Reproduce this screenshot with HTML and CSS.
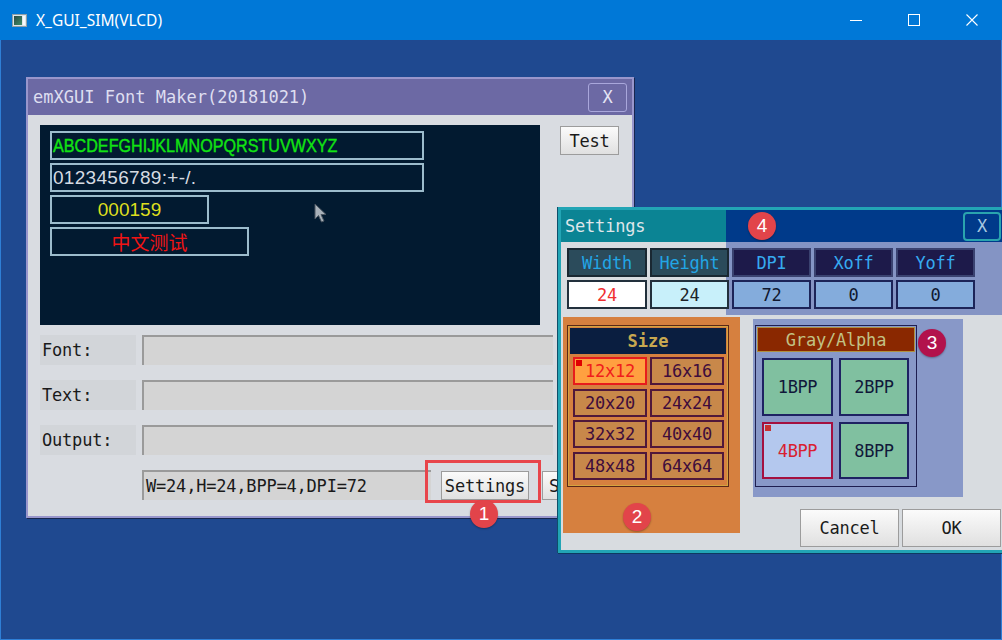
FILE: index.html
```html
<!DOCTYPE html>
<html>
<head>
<meta charset="utf-8">
<title>X_GUI_SIM(VLCD)</title>
<link rel="stylesheet" href="styles.css">
</head>
<body>
<div class="app">
  <div class="titlebar">
    <svg class="app-icon" width="15" height="13" viewBox="0 0 15 13">
      <defs>
        <linearGradient id="ig" x1="0" y1="0" x2="1" y2="1">
          <stop offset="0" stop-color="#2c4a44"/>
          <stop offset="1" stop-color="#3f8f6a"/>
        </linearGradient>
      </defs>
      <rect x="0.5" y="0.5" width="14" height="12" fill="#dfe6ea" stroke="#8fa0a8"/>
      <rect x="2" y="2" width="8" height="9" fill="url(#ig)"/>
      <rect x="11" y="2" width="2" height="9" fill="#f6f9fb"/>
    </svg>
    <span class="app-title">X_GUI_SIM(VLCD)</span>
    <div class="caps">
      <div class="cap"><svg width="12" height="12" viewBox="0 0 12 12"><line x1="0" y1="6.5" x2="12" y2="6.5" stroke="#fff" stroke-width="1"/></svg></div>
      <div class="cap"><svg width="12" height="12" viewBox="0 0 12 12"><rect x="0.5" y="0.5" width="11" height="11" fill="none" stroke="#fff" stroke-width="1"/></svg></div>
      <div class="cap"><svg width="12" height="12" viewBox="0 0 12 12"><path d="M0.5 0.5 L11.5 11.5 M11.5 0.5 L0.5 11.5" stroke="#fff" stroke-width="1.1"/></svg></div>
    </div>
  </div>

  <!-- Font Maker window -->
  <div class="fm">
    <div class="fm-title">
      <span>emXGUI Font Maker(20181021)</span>
      <div class="fm-close">X</div>
    </div>
    <div class="fm-body">
      <div class="top-row">
        <div class="lcd">
          <div class="lbox w1"><span class="t-green">ABCDEFGHIJKLMNOPQRSTUVWXYZ</span></div>
          <div class="lbox w1"><span class="t-digits">0123456789:+-/.</span></div>
          <div class="lbox w3 center"><span class="t-yellow">000159</span></div>
          <div class="lbox w4 center"><span class="t-red">中文测试</span></div>
          <svg class="cursor" width="14" height="20" viewBox="0 0 14 20">
            <path d="M1 1 L1 16 L4.5 12.5 L7.5 19 L10 18 L7 11.5 L12 11.5 Z" fill="#a9b1b9" stroke="#4a5560" stroke-width="1"/>
          </svg>
        </div>
        <div class="btn test">Test</div>
      </div>
      <div class="frow first">
        <div class="flabel">Font:</div>
        <div class="field"></div>
      </div>
      <div class="frow">
        <div class="flabel">Text:</div>
        <div class="field"></div>
      </div>
      <div class="frow">
        <div class="flabel">Output:</div>
        <div class="field"></div>
      </div>
      <div class="frow">
        <div class="fspacer"></div>
        <div class="field info">W=24,H=24,BPP=4,DPI=72</div>
        <div class="btn setbtn">Settings</div>
        <div class="btn sbtn2">Save</div>
      </div>
    </div>
  </div>

  <div class="hl"></div>
  <div class="badge b1">1</div>

  <!-- Settings window -->
  <div class="st">
    <div class="st-title">
      <span>Settings</span>
      <div class="st-close">X</div>
    </div>
    <div class="params">
      <div class="ph">Width</div>
      <div class="ph">Height</div>
      <div class="ph ov">DPI</div>
      <div class="ph ov">Xoff</div>
      <div class="ph ov">Yoff</div>
      <div class="pv w">24</div>
      <div class="pv h">24</div>
      <div class="pv ov">72</div>
      <div class="pv ov">0</div>
      <div class="pv ov">0</div>
    </div>
    <div class="lower">
      <div class="orange">
        <div class="sgroup">
          <div class="stitle">Size</div>
          <div class="sgrid">
            <div class="sbtn sel">12x12</div>
            <div class="sbtn">16x16</div>
            <div class="sbtn">20x20</div>
            <div class="sbtn">24x24</div>
            <div class="sbtn">32x32</div>
            <div class="sbtn">40x40</div>
            <div class="sbtn">48x48</div>
            <div class="sbtn">64x64</div>
          </div>
        </div>
      </div>
      <div class="rcol">
        <div class="blue">
          <div class="ggroup">
            <div class="gtitle">Gray/Alpha</div>
            <div class="ggrid">
              <div class="gbtn">1BPP</div>
              <div class="gbtn">2BPP</div>
              <div class="gbtn sel">4BPP</div>
              <div class="gbtn">8BPP</div>
            </div>
          </div>
        </div>
        <div class="okrow">
          <div class="btn dlg">Cancel</div>
          <div class="btn dlg">OK</div>
        </div>
      </div>
    </div>
  </div>

  <div class="badge b2">2</div>
  <div class="badge b3">3</div>
  <div class="badge b4">4</div>
</div>
</body>
</html>
```
FILE: styles.css
```css
* { box-sizing: border-box; }

body {
  margin: 0;
  width: 1002px;
  height: 640px;
  overflow: hidden;
  font-family: "DejaVu Sans Mono", "Liberation Mono", monospace;
}

.app {
  position: relative;
  width: 1002px;
  height: 640px;
  background: #1f4990;
  overflow: hidden;
  box-shadow: inset 1px 0 0 #2f7fd6, inset -1px 0 0 #2f7fd6, inset 0 -1px 0 #2f7fd6;
}

/* ---------- outer title bar ---------- */
.titlebar {
  height: 40px;
  background: #0078d7;
  display: flex;
  align-items: center;
  color: #fff;
  font-family: "Noto Sans", "Open Sans", sans-serif;
  font-size: 15.5px;
}
.app-icon { margin-left: 12px; margin-top: 1px; }
.app-title { margin-left: 9px; }
.caps { margin-left: auto; display: flex; margin-right: 1px; }
.cap {
  width: 58px;
  height: 40px;
  display: flex;
  align-items: center;
  justify-content: center;
}

/* ---------- Font Maker window ---------- */
.fm {
  position: absolute;
  left: 26px;
  top: 77px;
  width: 608px;
  height: 441px;
  border: 2px solid #9896cc;
  background: #d9dce1;
  box-shadow: 1px 1px 0 #17264f;
  display: flex;
  flex-direction: column;
}
.fm-title {
  height: 36px;
  background: #6c69a4;
  display: flex;
  align-items: center;
  padding-left: 5px;
  color: #dedef0;
  font-size: 17px;
}
.fm-close {
  margin-left: auto;
  margin-right: 5px;
  width: 39px;
  height: 29px;
  border: 1px solid #a9a7db;
  border-radius: 3px;
  display: flex;
  align-items: center;
  justify-content: center;
  color: #e4e4f4;
}
.fm-body {
  flex: 1;
  padding: 10px 0 0 12px;
  display: flex;
  flex-direction: column;
}
.top-row { display: flex; height: 200px; }
.lcd {
  position: relative;
  width: 500px;
  height: 200px;
  background: #021a30;
  padding: 6px 10px;
  display: flex;
  flex-direction: column;
  align-items: flex-start;
  gap: 3px;
}
.lbox {
  height: 29px;
  border: 2px solid #9cbccc;
  display: flex;
  align-items: center;
  overflow: hidden;
  white-space: nowrap;
}
.lbox.w1 { width: 374px; padding-left: 1px; }
.lbox.w3 { width: 159px; }
.lbox.w4 { width: 199px; }
.lbox.center { justify-content: center; }
.t-green {
  display: inline-block;
  font-family: "Liberation Sans", Arial, sans-serif;
  font-size: 19px;
  color: #12e412;
  -webkit-text-stroke: 0.4px #12e412;
  transform: scaleX(0.85);
  transform-origin: left center;
}
.t-digits {
  font-family: "Liberation Sans", Arial, sans-serif;
  font-size: 19px;
  letter-spacing: 0.3px;
  color: #d6dce2;
}
.t-yellow {
  font-family: "Liberation Sans", Arial, sans-serif;
  font-size: 19px;
  color: #dede1e;
}
.t-red {
  font-family: "Noto Sans CJK SC", sans-serif;
  font-size: 19px;
  color: #f01414;
}
.cursor { position: absolute; left: 274px; top: 78px; }

.btn {
  background: linear-gradient(#fbfbfb, #e0e0e0);
  border: 1px solid #9c9c9c;
  color: #1a1a1a;
  font-size: 17px;
  letter-spacing: -0.2px;
  display: flex;
  align-items: center;
  justify-content: center;
  white-space: nowrap;
}
.test { margin-left: 20px; margin-top: 1px; width: 59px; height: 29px; }

.frow { display: flex; height: 30px; margin-top: 15px; }
.frow.first { margin-top: 10px; }
.flabel {
  width: 96px;
  background: #d2d5d9;
  padding-left: 2px;
  display: flex;
  align-items: center;
  color: #1a1a1a;
  font-size: 17px;
  letter-spacing: -0.2px;
}
.fspacer { width: 96px; }
.field {
  width: 411px;
  margin-left: 6px;
  background: #d4d4d4;
  border-style: solid;
  border-width: 2px 0 0 2px;
  border-color: #9a9a9a;
}
.field.info {
  width: 289px;
  display: flex;
  align-items: center;
  padding-left: 2px;
  font-size: 17px;
  letter-spacing: -0.2px;
  color: #1a1a1a;
}
.setbtn { margin-left: 10px; margin-top: 1px; width: 88px; height: 29px; }
.sbtn2 { margin-left: 13px; margin-top: 1px; width: 88px; height: 29px; justify-content: flex-start; padding-left: 6px; }

/* ---------- annotations ---------- */
.hl {
  position: absolute;
  left: 425px;
  top: 460px;
  width: 116px;
  height: 43px;
  border: 3px solid #e8454b;
}
.badge {
  position: absolute;
  width: 28px;
  height: 28px;
  border-radius: 50%;
  background: #e2444a;
  color: #fff;
  font-family: "Liberation Sans", Arial, sans-serif;
  font-size: 19px;
  display: flex;
  align-items: center;
  justify-content: center;
  box-shadow: 0 1px 2px rgba(0, 0, 0, 0.3);
}
.b1 { left: 470px; top: 500px; }
.b2 { left: 623px; top: 503px; }
.b3 { left: 918px; top: 329px; background: #b2124c; }
.b4 { left: 748px; top: 212px; }

/* ---------- Settings window ---------- */
.st {
  position: absolute;
  left: 558px;
  top: 207px;
  width: 447px;
  height: 346px;
  border: 3px solid #22a5b5;
  background: #d8dce0;
  display: flex;
  flex-direction: column;
  box-shadow: -1px 0 0 #0e4f6a, 0 1px 0 #0e3a60;
}
.st-title {
  height: 32px;
  background: linear-gradient(to right, #0b8494 165px, #003a8a 165px);
  display: flex;
  align-items: center;
  padding-left: 4px;
  color: #dfe6ea;
  font-size: 17px;
  letter-spacing: -0.2px;
}
.st-close {
  margin-left: auto;
  margin-right: 1px;
  width: 38px;
  height: 29px;
  border: 2px solid #2aa4ae;
  border-radius: 4px;
  display: flex;
  align-items: center;
  justify-content: center;
  color: #a8c8e0;
}
.params {
  height: 73px;
  padding: 6px 0 0 6px;
  background: linear-gradient(to right, #d8dce0 165px, #8494c4 165px);
  display: grid;
  grid-template-columns: 80px repeat(4, 79px);
  grid-template-rows: 29px 29px;
  gap: 3px;
  align-content: start;
}
.ph, .pv {
  display: flex;
  align-items: center;
  justify-content: center;
  font-size: 17px;
  letter-spacing: -0.2px;
}
.ph {
  border: 2px solid #1a2832;
  background: #2b4b5b;
  color: #22a6e6;
}
.ph.ov {
  background: #1d1a4a;
  border-color: #3a4270;
  color: #36aaf0;
}
.pv { border: 2px solid #22303c; }
.pv.w { background: #fff; color: #f03030; }
.pv.h { background: #c8f0fa; color: #202428; }
.pv.ov { background: #84acdc; color: #101830; border-color: #1c2458; }

.lower { flex: 1; display: flex; }
.orange {
  margin: 2px 0 0 2px;
  width: 177px;
  height: 216px;
  background: #d6803f;
  padding: 8px 0 0 4px;
}
.sgroup {
  width: 162px;
  height: 162px;
  border: 1px solid #5a2818;
  box-shadow: inset 0 0 0 1px #d4a440;
  padding: 2px;
}
.stitle {
  height: 26px;
  background: #0a1e40;
  color: #c8a850;
  font-size: 17px;
  font-weight: bold;
  display: flex;
  align-items: center;
  justify-content: center;
}
.sgrid {
  display: grid;
  grid-template-columns: 74px 74px;
  grid-auto-rows: 28px;
  column-gap: 3px;
  row-gap: 3.67px;
  margin: 3px 0 0 3px;
}
.sbtn {
  position: relative;
  border: 2px solid #50183a;
  background: #c8884a;
  color: #3e0c3c;
  font-size: 17px;
  letter-spacing: -0.2px;
  display: flex;
  align-items: center;
  justify-content: center;
}
.sbtn.sel { background: #ffa040; border-color: #e81c1c; color: #f01c1c; }
.sel::before {
  content: "";
  position: absolute;
  left: 1px;
  top: 1px;
  width: 6px;
  height: 6px;
  background: #e00000;
}

.rcol { display: flex; flex-direction: column; margin-left: 13px; }
.blue {
  margin-top: 4px;
  width: 210px;
  height: 178px;
  background: #8898c8;
  padding: 6px 0 0 2px;
}
.ggroup {
  width: 162px;
  height: 162px;
  border: 1px solid #1e1e50;
  padding: 1px;
}
.gtitle {
  height: 25px;
  background: #8a2800;
  border: 1px solid #b09040;
  color: #c2c284;
  font-size: 17px;
  letter-spacing: -0.2px;
  display: flex;
  align-items: center;
  justify-content: center;
}
.ggrid {
  display: grid;
  grid-template-columns: 71px 70px;
  grid-template-rows: 58px 57px;
  gap: 6px;
  margin: 6px 0 0 5px;
}
.gbtn {
  position: relative;
  border: 2px solid #1e2262;
  background: #80c0a0;
  color: #10183a;
  font-size: 17px;
  letter-spacing: -0.4px;
  display: flex;
  align-items: center;
  justify-content: center;
}
.gbtn.sel { background: #b4c8ee; border-color: #a41040; color: #d82030; }
.gbtn.sel::before { background: #c83030; }

.okrow { display: flex; gap: 3px; margin-top: 12px; margin-left: 47px; }
.dlg { width: 99px; height: 38px; }
```
